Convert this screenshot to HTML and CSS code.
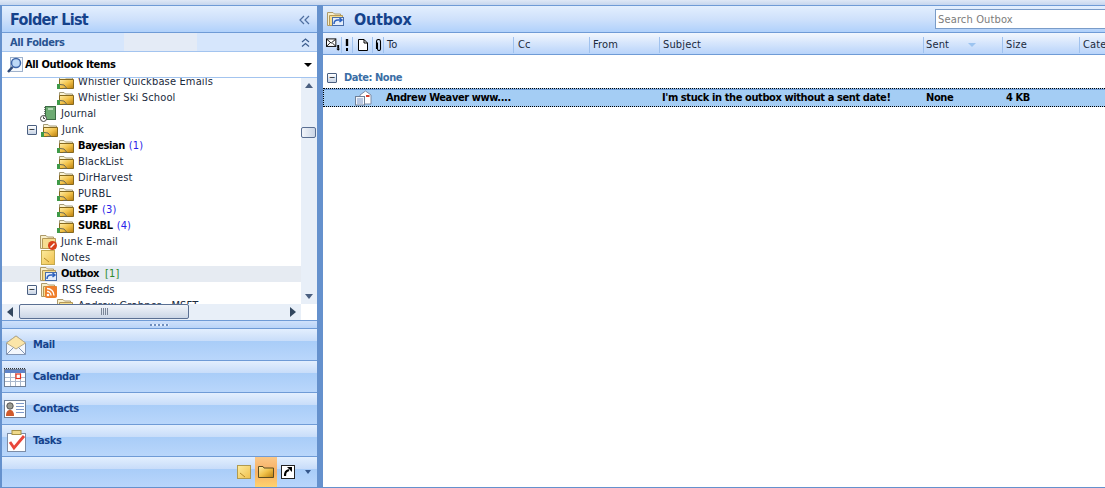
FILE: index.html
```html
<!DOCTYPE html>
<html lang="en">
<head>
<meta charset="utf-8">
<title>Outbox</title>
<link rel="stylesheet" href="styles.css">
</head>
<body>
<svg class="defs" width="0" height="0">
  <defs>
    <linearGradient id="fg" x1="0" y1="0" x2="1" y2="1"><stop offset="0" stop-color="#ffeeaa"/><stop offset=".5" stop-color="#f2c24a"/><stop offset="1" stop-color="#b97c0c"/></linearGradient>
    <linearGradient id="nt" x1="0" y1="0" x2="1" y2="1"><stop offset="0" stop-color="#fdeb9e"/><stop offset="1" stop-color="#efc04c"/></linearGradient>
    <symbol id="search-folder" viewBox="0 0 18 16">
      <path d="M2.500 7V2.500H7L8.500 4H15.500V7" fill="#faf3d4" stroke="#a39a78"/>
      <path d="M2.500 5.500H16.500V14.500H2.500Z" fill="url(#fg)" stroke="#86691f"/>
      <rect x="0" y="10" width="3" height="5" fill="#3f9a48"/>
      <path d="M3 10.500l4 .5 3 3.500H6" fill="none" stroke="#6d6a55"/>
    </symbol>
    <symbol id="plain-folder" viewBox="0 0 18 16">
      <path d="M.5 12V1.500H6L7.500 3H13.500V14.500H.5Z" fill="#f8efcc" stroke="#ad9a6a"/>
      <path d="M2.500 4.500H15.500V14.500H2.500Z" fill="#f6dd90" stroke="#b69a58"/>
    </symbol>
  </defs>
</svg>
<div class="app">
  <aside class="sidebar">
    <header class="pane-title">
      <h1 class="title-left">Folder List</h1>
      <svg class="chev" width="11" height="10" viewBox="0 0 11 10"><path d="M5 1L1 5l4 4M10 1L6 5l4 4" fill="none" stroke="#4f6f9f" stroke-width="1.200"/></svg>
    </header>
    <div class="all-folders">
      <span class="all-label">All Folders</span>
      <span class="smudge"></span>
      <svg class="dbl" width="11" height="11" viewBox="0 0 11 11"><path d="M2 5l3.500-3L9 5M2 9.500l3.500-3 3.500 3" fill="none" stroke="#3d5e8e" stroke-width="1.200"/></svg>
    </div>
    <div class="combo">
      <svg width="18" height="18" viewBox="0 0 18 18"><rect x="4.500" y="1.500" width="12" height="14" fill="#f4f8fd" stroke="#9fb2cc"/><circle cx="10" cy="7" r="4.500" fill="#bcd8f6" stroke="#3f66a8" stroke-width="1.500"/><path d="M6.500 11L2 16" stroke="#2f4a78" stroke-width="2.500"/></svg>
      <span class="combo-text">All Outlook Items</span>
      <span class="tri-down"></span>
    </div>
    <div class="tree-wrap">
      <ul class="tree">
        <li class="row in2"><svg class="ico"><use href="#search-folder"/></svg><span>Whistler Quickbase Emails</span></li>
        <li class="row in2"><svg class="ico"><use href="#search-folder"/></svg><span>Whistler Ski School</span></li>
        <li class="row in1"><svg class="ico" viewBox="0 0 18 16"><rect x="5.500" y=".5" width="10" height="13" fill="#6dab72" stroke="#3c6b44"/><path d="M4.500 1v12" stroke="#777" stroke-dasharray="1 1"/><path d="M8 3h5" stroke="#b4d9b8" stroke-width="2"/><circle cx="3.500" cy="12.500" r="3" fill="#fff" stroke="#444"/><path d="M3.500 10.500v2h1.500" fill="none" stroke="#444"/></svg><span>Journal</span></li>
        <li class="row in1"><span class="tog">−</span><svg class="ico"><use href="#search-folder"/></svg><span>Junk</span></li>
        <li class="row in2"><svg class="ico"><use href="#search-folder"/></svg><b>Bayesian</b><i class="cnt">(1)</i></li>
        <li class="row in2"><svg class="ico"><use href="#search-folder"/></svg><span>BlackList</span></li>
        <li class="row in2"><svg class="ico"><use href="#search-folder"/></svg><span>DirHarvest</span></li>
        <li class="row in2"><svg class="ico"><use href="#search-folder"/></svg><span>PURBL</span></li>
        <li class="row in2"><svg class="ico"><use href="#search-folder"/></svg><b>SPF</b><i class="cnt">(3)</i></li>
        <li class="row in2"><svg class="ico"><use href="#search-folder"/></svg><b>SURBL</b><i class="cnt">(4)</i></li>
        <li class="row in1"><svg class="ico" viewBox="0 0 18 16"><use href="#plain-folder" width="18" height="16"/><circle cx="12.500" cy="11.500" r="4.500" fill="#d8401a"/><path d="M10.500 13.500l4-4" stroke="#fff" stroke-width="1.400"/></svg><span>Junk E-mail</span></li>
        <li class="row in1"><svg class="ico" viewBox="0 0 18 16"><rect x="1.500" y=".5" width="13" height="14" fill="url(#nt)" stroke="#c4a94f"/><path d="M4 8l5 4" stroke="#b48a2c"/></svg><span>Notes</span></li>
        <li class="row in1 current"><svg class="ico" viewBox="0 0 18 16"><use href="#plain-folder" width="18" height="16"/><rect x="5.500" y="6.500" width="11" height="8" fill="#e4edfa" stroke="#4a6ea8"/><path d="M7 13c0-3 2-4 4-4h3M12.500 7l2.500 2-2.500 2" fill="none" stroke="#2d62c0" stroke-width="1.500"/></svg><b>Outbox</b><i class="cnt green">[1]</i></li>
        <li class="row in1"><span class="tog">−</span><svg class="ico" viewBox="0 0 18 16"><use href="#plain-folder" width="18" height="16"/><rect x="4" y="4" width="12" height="12" rx="2" fill="#ef7f2c"/><circle cx="7" cy="13" r="1.300" fill="#fff"/><path d="M6 9.500a4 4 0 014 4M6 6.500a7 7 0 017 7" fill="none" stroke="#fff" stroke-width="1.400"/></svg><span>RSS Feeds</span></li>
        <li class="row in2"><svg class="ico"><use href="#plain-folder"/></svg><span>Andrew Grabner - MSFT</span></li>
      </ul>
      <div class="vscroll">
        <span class="tri-up"></span>
        <span class="thumb-v"></span>
        <span class="tri-down tri-gray"></span>
      </div>
    </div>
    <div class="hscroll">
      <span class="tri-left"></span>
      <span class="thumb-h"><i class="grip"></i></span>
      <span class="tri-right"></span>
    </div>
    <div class="splitter"><i class="dots"></i></div>
    <nav class="nav">
      <a class="nav-btn">
        <svg class="nav-ico" viewBox="0 0 24 24"><path d="M3.500 10L13 3l9.500 7v11.500h-19Z" fill="#f4f7fc" stroke="#8295b4"/><path d="M3.500 10L13 16l9.500-6L13 3Z" fill="#fbe5a8" stroke="#b9ab86"/><path d="M3.500 21.500l7-7M22.500 21.500l-7-7" stroke="#8295b4"/></svg>
        <span>Mail</span>
      </a>
      <a class="nav-btn">
        <svg class="nav-ico" viewBox="0 0 24 24"><rect x="1.500" y="4.500" width="21" height="17" fill="#fff" stroke="#6f7f96"/><rect x="2" y="5" width="20" height="3" fill="#5e83c8"/><path d="M1 3.500h22" stroke="#333" stroke-dasharray="1 1"/><path d="M2 12.500h20M2 16.500h20M7.500 8v13M12.500 8v13M17.500 8v13" stroke="#aab8cc"/><rect x="13" y="9" width="4.500" height="4.500" fill="#fff" stroke="#e8321c" stroke-width="1.200"/></svg>
        <span>Calendar</span>
      </a>
      <a class="nav-btn">
        <svg class="nav-ico" viewBox="0 0 24 24"><rect x="1.500" y="3.500" width="21" height="17" fill="#fff" stroke="#6f7f96"/><circle cx="7" cy="9" r="3.200" fill="#9a9a92" stroke="#555"/><path d="M3 19c0-5 2-6 4-6s4 1 4 6Z" fill="#d05a2c"/><path d="M13 6.500h8M13 9.500h8M13 12.500h8M13 15.500h8" stroke="#7d98c8"/></svg>
        <span>Contacts</span>
      </a>
      <a class="nav-btn">
        <svg class="nav-ico" viewBox="0 0 24 24"><rect x="4.500" y="4.500" width="18" height="18" fill="#fff" stroke="#7c8ca6"/><rect x="9" y="1.500" width="9" height="4" fill="#f0d98a" stroke="#a69148"/><path d="M7 13l4 6 10-12" fill="none" stroke="#e8463a" stroke-width="2.800"/></svg>
        <span>Tasks</span>
      </a>
      <div class="nav-foot">
        <svg class="foot-ico" viewBox="0 0 16 16"><rect x="1.500" y="1.500" width="13" height="13" fill="url(#nt)" stroke="#b09a50"/><path d="M4 9l5 4" stroke="#b48a2c"/></svg>
        <span class="foot-active"><svg class="foot-ico" viewBox="0 0 16 16"><path d="M.5 13.500V2.500H5l1 1.500h9.500v9.500Z" fill="url(#fg)" stroke="#5c4c22"/></svg></span>
        <svg class="foot-ico short" viewBox="0 0 16 16"><rect x="1.500" y="1.500" width="13" height="13" fill="#fff" stroke="#222"/><path d="M5 12c0-4 1-5 4-6" fill="none" stroke="#000" stroke-width="2.200"/><path d="M7 3h5v5Z" fill="#000"/></svg>
        <span class="foot-tri"></span>
      </div>
    </nav>
  </aside>
  <main class="content">
    <header class="pane-title content-title">
      <svg class="title-ico" viewBox="0 0 18 16"><use href="#plain-folder" width="18" height="16"/><rect x="5.500" y="6.500" width="11" height="8" fill="#e4edfa" stroke="#4a6ea8"/><path d="M7 13c0-3 2-4 4-4h3M12.500 7l2.500 2-2.500 2" fill="none" stroke="#2d62c0" stroke-width="1.500"/></svg>
      <h1 class="title-right">Outbox</h1>
      <span class="searchbox">Search Outbox</span>
    </header>
    <div class="cols">
      <span class="col c-ic1"><svg width="16" height="14" viewBox="0 0 16 14"><rect x=".5" y=".5" width="10" height="8" fill="#fff" stroke="#000"/><path d="M1 1l4.500 4L10 1M1 8l3-3M10 8L7 5" fill="none" stroke="#000"/><path d="M13 7v4" stroke="#000" stroke-width="2"/><path d="M11 11h4l-2 2Z" fill="#000"/></svg></span>
      <span class="col c-ic2"><svg width="4" height="12" viewBox="0 0 4 12"><path d="M2 0v7" stroke="#000" stroke-width="2.400"/><path d="M2 9v3" stroke="#000" stroke-width="2"/></svg></span>
      <span class="col c-ic3"><svg width="10" height="12" viewBox="0 0 10 12"><path d="M.5.500H6L9.500 4V11.500H.5Z" fill="#fff" stroke="#000"/><path d="M6 .5V4h3.500" fill="none" stroke="#000"/></svg></span>
      <span class="col c-ic4"><svg width="7" height="12" viewBox="0 0 7 12"><path d="M2 3v6.500a1.500 1.500 0 003 0V2a2 2 0 00-4 0v7.500" fill="none" stroke="#000" stroke-width="1.100" transform="translate(.5 .5)"/></svg></span>
      <span class="col c-to">To</span>
      <span class="col c-cc">Cc</span>
      <span class="col c-from">From</span>
      <span class="col c-subj">Subject</span>
      <span class="col c-sent">Sent<i class="sort"></i></span>
      <span class="col c-size">Size</span>
      <span class="col c-cat">Categories</span>
    </div>
    <div class="group"><span class="tog">−</span><span>Date: None</span></div>
    <div class="msg">
      <svg class="msg-ico" viewBox="0 0 18 16"><path d="M6 5l5.500-4L17 5v9H6Z" fill="#fff" stroke="#7c8ca6"/><path d="M12 6h3.500" stroke="#d8402c" stroke-width="2"/><rect x="1.500" y="6.500" width="9" height="8.500" fill="#f4f7fc" stroke="#6f7f96"/><path d="M3 9h6M3 11h6M3 13h6" stroke="#7d98c8"/></svg>
      <b class="m-to">Andrew Weaver www....</b>
      <b class="m-subj">I'm stuck in the outbox without a sent date!</b>
      <b class="m-sent">None</b>
      <b class="m-size">4 KB</b>
    </div>
  </main>
</div>
</body>
</html>
```
FILE: styles.css
```css
* { box-sizing: border-box; }
html, body { margin: 0; padding: 0; height: 100%; overflow: hidden; }
body { font: 11px/16px "DejaVu Sans Condensed", "DejaVu Sans", sans-serif; letter-spacing: .15px; color: #000; background: #6591cd; }
.defs { position: absolute; }
.app { display: flex; height: 488px; width: 1105px; padding-top: 5px; background: linear-gradient(#dfe8f6, #c6d6ee 5px, #6591cd 5px); }
.sidebar { width: 317px; margin-left: 1px; flex: none; display: flex; flex-direction: column; background: #fff; border: 1px solid #6591cd; border-top-color: #6f9bd6; }
.content { flex: 1; min-width: 0; margin-left: 4px; background: #fff; border-top: 1px solid #6f9bd6; border-left: 1px solid #6591cd; border-bottom: 1px solid #6591cd; overflow: hidden; }
.pane-title { height: 27px; flex: none; display: flex; align-items: center; background: linear-gradient(#e3effe, #cfe1fb 50%, #b0d1fb); border-bottom: 1px solid #6f9bd6; color: #15428b; }
.pane-title h1 { margin: 0; padding-top: 2px; font: bold 16px/20px "DejaVu Sans Condensed", "DejaVu Sans", sans-serif; color: #15428b; }
.title-left { margin-left: 8px !important; flex: 1; letter-spacing: -.7px; }
.title-right { letter-spacing: -.2px; }
.chev { margin-right: 7px; margin-top: 2px; }
.all-folders { height: 19px; flex: none; display: flex; align-items: center; background: #d6e6fc; border-bottom: 1px solid #a3c4ef; font-weight: bold; letter-spacing: -.4px; color: #2a5491; padding-left: 8px; }
.all-label { width: 114px; padding-top: 1px; }
.smudge { width: 73px; height: 18px; background: #e4ebf6; }
.dbl { margin-left: auto; margin-right: 6px; }
.combo { height: 26px; flex: none; display: flex; align-items: center; padding: 0 5px 0 4px; border-bottom: 1px solid #a3c4ef; font-weight: bold; letter-spacing: -.35px; gap: 1px; }
.combo-text { flex: 1; padding-top: 1px; }
.tri-down { width: 0; height: 0; border: 4px solid transparent; border-top: 4px solid #000; border-bottom: 0; }
.tree-wrap { height: 226px; flex: none; display: flex; overflow: hidden; }
.tree { list-style: none; margin: -4px 0 0; padding: 0; flex: 1; min-width: 0; }
.row { height: 16px; display: flex; align-items: center; white-space: nowrap; color: #1a2a3c; }
.row b { color: #000; letter-spacing: -.4px; }
.in1 { padding-left: 38px; }
.in2 { padding-left: 55px; }
.row .tog { margin-left: -13px; margin-right: 4px; }
.ico { width: 18px; height: 16px; flex: none; margin-right: 3px; }
.tog { width: 10px; height: 10px; flex: none; border: 1px solid #4a5f80; border-radius: 1px; background: linear-gradient(#fff, #c6d2e4); font: 8px/7px "DejaVu Sans", sans-serif; text-align: center; color: #000; }
.cnt { font-style: normal; color: #2a1fe8; margin-left: 4px; }
.cnt.green { color: #2a8a2a; margin-left: 6px; }
.current { background: #e6ebf2; }
.vscroll { width: 16px; flex: none; display: flex; flex-direction: column; align-items: center; background: #e8eff8; padding: 5px 0; }
.tri-up { width: 0; height: 0; border: 4px solid transparent; border-bottom: 5px solid #4a5f80; border-top: 0; }
.tri-gray { border-top-color: #4a5f80; border-top-width: 5px; margin-top: auto; }
.thumb-v { width: 15px; height: 11px; margin-top: 39px; align-self: flex-start; border: 1px solid #5a6f92; border-radius: 2px; background: linear-gradient(90deg, #f2f5fa, #cbd6e6); }
.hscroll { height: 16px; width: 315px; flex: none; display: flex; align-items: center; padding: 0 5px 1px 5px; background: #e8eff8; border-right: 16px solid #fff; }
.tri-left { width: 0; height: 0; border: 5px solid transparent; border-right: 6px solid #33475f; border-left: 0; }
.thumb-h { width: 170px; height: 15px; margin-left: 6px; border: 1px solid #5a6f92; border-radius: 2px; background: linear-gradient(#f2f5fa, #cbd6e6); display: flex; justify-content: center; align-items: center; }
.grip { width: 7px; height: 7px; background: repeating-linear-gradient(90deg, #7a8698 0 1px, transparent 1px 2px); }
.tri-right { width: 0; height: 0; border: 5px solid transparent; border-left: 6px solid #33475f; border-right: 0; margin-left: auto; }
.splitter { height: 9px; flex: none; background: linear-gradient(#cfe1fb, #b9d4f8); border-top: 1px solid #6f9bd6; border-bottom: 1px solid #6f9bd6; display: flex; justify-content: center; align-items: center; }
.dots { width: 19px; height: 2px; background: repeating-linear-gradient(90deg, #6f8fbf 0 2px, #e3effe 2px 4px); }
.nav { flex: 1; display: flex; flex-direction: column; min-height: 0; }
.nav-btn { height: 32px; flex: none; display: flex; align-items: center; padding-left: 1px; gap: 6px; font-weight: bold; letter-spacing: -.4px; color: #15428b; background: linear-gradient(#e3effe, #c7dcf9 40%, #a9cdf8 40%, #b9d6fb); border-bottom: 1px solid #6f9bd6; }
.nav-ico { width: 24px; height: 24px; flex: none; }
.nav-foot { flex: 1; display: flex; justify-content: flex-end; align-items: center; padding-right: 6px; background: linear-gradient(#e3effe, #c7dcf9 40%, #a9cdf8 40%, #b9d6fb); }
.foot-ico { width: 16px; height: 16px; flex: none; }
.foot-active { width: 22px; height: 100%; margin: 0 3px; display: flex; align-items: center; justify-content: center; background: linear-gradient(#fbc887, #f7ae62 50%, #ffd36f); }
.foot-tri { width: 0; height: 0; margin-left: 9px; border: 3px solid transparent; border-top: 4px solid #33558a; border-bottom: 0; }
.content-title { padding-left: 4px; }
.title-ico { width: 18px; height: 16px; margin-right: 9px; flex: none; }
.searchbox { margin-left: auto; width: 175px; height: 20px; margin-right: -5px; border: 1px solid #7a9cc8; background: #fff; color: #7c7c7c; padding: 1px 0 0 2px; line-height: 18px; flex: none; }
.cols { height: 22px; display: flex; align-items: center; padding-top: 2px; background: linear-gradient(#f2f7fe, #d5e5fc 50%, #b9d4fa); border-bottom: 1px solid #6f9bd6; white-space: nowrap; color: #1a2a3c; }
.col { height: 16px; flex: none; display: flex; align-items: center; border-left: 1px solid #a0c2ee; padding-left: 3px; }
.c-ic1 { width: 18px; border-left: 0; padding-left: 3px; }
.c-ic2 { width: 11px; padding-left: 3px; }
.c-ic3 { width: 20px; padding-left: 5px; }
.c-ic4 { width: 11px; padding-left: 2px; }
.c-to { width: 130px; }
.c-cc { width: 76px; padding-left: 4px; }
.c-from { width: 70px; }
.c-subj { width: 264px; }
.c-sent { width: 79px; padding-left: 2px; }
.c-size { width: 77px; }
.c-cat { width: 80px; }
.sort { width: 0; height: 0; margin-left: 19px; border: 4px solid transparent; border-top: 4px solid #9cc4f0; border-bottom: 0; }
.group { height: 16px; margin-top: 15px; padding-left: 4px; display: flex; align-items: center; gap: 7px; font-weight: bold; letter-spacing: -.45px; color: #3a6ea5; }
.msg { height: 19px; margin-top: 2px; display: flex; align-items: center; background: #a4cdf4; border-top: 1px dotted #000; border-bottom: 1px dotted #000; border-left: 1px dotted #000; white-space: nowrap; padding-left: 30px; box-shadow: inset 0 1px 0 #6f9bd6; }
.msg b { letter-spacing: -.4px; }
.msg-ico { width: 18px; height: 16px; flex: none; margin-right: 14px; }
.m-to { width: 276px; flex: none; }
.m-subj { width: 264px; flex: none; }
.m-sent { width: 80px; flex: none; }
.m-size { flex: none; }
```
